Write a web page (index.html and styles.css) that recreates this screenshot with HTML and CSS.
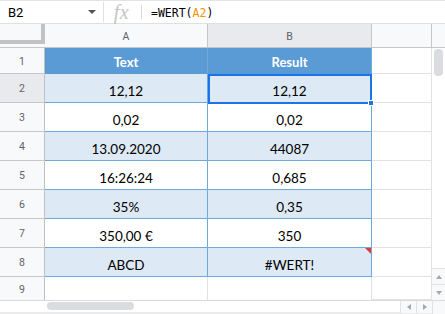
FILE: index.html
```html
<!DOCTYPE html>
<html>
<head>
<meta charset="utf-8">
<link rel="stylesheet" href="styles.css">
</head>
<body>
<div class="app">
  <div class="fbar">
    <div class="namebox"><span class="nb-text">B2</span><span class="nb-caret"></span></div>
    <div class="fx">fx</div>
    <div class="formula">=WERT(<span class="ref">A2</span>)</div>
  </div>
  <div class="sheet">
    <div class="corner"><div class="freeze"></div></div>
    <div class="colh">A</div>
    <div class="colh sel">B</div>
    <div class="colh">&nbsp;</div>
    <div class="vhead"></div>

    <div class="rowh">1</div>
    <div class="cell th">Text</div>
    <div class="cell th">Result</div>
    <div class="cell empty"></div>
    <div class="vscroll">
      <div class="vthumb"></div>
      <div class="vspace"></div>
      <div class="sbtn"><span class="tri up"></span></div>
      <div class="sbtn"><span class="tri down"></span></div>
    </div>

    <div class="rowh sel">2</div>
    <div class="cell band">12,12</div>
    <div class="cell band">12,12</div>
    <div class="cell empty"></div>

    <div class="rowh">3</div>
    <div class="cell">0,02</div>
    <div class="cell">0,02</div>
    <div class="cell empty"></div>

    <div class="rowh">4</div>
    <div class="cell band">13.09.2020</div>
    <div class="cell band">44087</div>
    <div class="cell empty"></div>

    <div class="rowh">5</div>
    <div class="cell">16:26:24</div>
    <div class="cell">0,685</div>
    <div class="cell empty"></div>

    <div class="rowh">6</div>
    <div class="cell band">35%</div>
    <div class="cell band">0,35</div>
    <div class="cell empty"></div>

    <div class="rowh">7</div>
    <div class="cell">350,00 €</div>
    <div class="cell">350</div>
    <div class="cell empty"></div>

    <div class="rowh">8</div>
    <div class="cell band">ABCD</div>
    <div class="cell band err">#WERT!<span class="note"></span></div>
    <div class="cell empty"></div>

    <div class="rowh last">9</div>
    <div class="cell plain"></div>
    <div class="cell plain"></div>
    <div class="cell empty"></div>

    <div class="hscroll">
      <div class="hthumb"></div>
      <div class="hspace"></div>
      <div class="sbtn h"><span class="tri left"></span></div>
      <div class="sbtn h"><span class="tri right"></span></div>
    </div>
    <div class="scorner"></div>

    <div class="selection"></div>
    <div class="handle"></div>
  </div>
</div>
</body>
</html>
```
FILE: styles.css
```css
* { box-sizing: border-box; }
html, body { margin: 0; padding: 0; }
body {
  width: 445px;
  height: 314px;
  overflow: hidden;
  background: #fff;
  font-family: "Lato", "Open Sans", sans-serif;
}
.app { width: 445px; height: 314px; display: flex; flex-direction: column; }

/* formula bar */
.fbar {
  height: 24px;
  border-top: 1px solid #e3e3e3;
  border-bottom: 1px solid #e0e0e0;
  display: flex;
  align-items: center;
}
.namebox {
  width: 104px;
  height: 20px;
  padding-left: 8px;
  padding-right: 7px;
  display: flex;
  align-items: center;
  justify-content: space-between;
  border-right: 1px solid #e0e0e0;
}
.nb-text { font-family: "Roboto", "Liberation Sans", sans-serif; font-size: 13px; color: #000; }
.nb-caret {
  width: 0; height: 0;
  border-left: 4px solid transparent;
  border-right: 4px solid transparent;
  border-top: 4px solid #555;
}
.fx {
  width: 38px;
  height: 14px;
  display: flex;
  align-items: center;
  justify-content: center;
  border-right: 1px solid #d8d8d8;
  font-family: "Liberation Serif", serif;
  font-style: italic;
  font-size: 20px;
  color: #c4c4c4;
  letter-spacing: 0.5px;
  padding-right: 2px;
}
.formula {
  padding-left: 9px;
  font-family: "DejaVu Sans Mono", monospace;
  font-size: 11.5px;
  color: #000;
  padding-top: 1px;
}
.ref { color: #f29500; }

/* sheet grid */
.sheet {
  position: relative;
  display: grid;
  grid-template-columns: 45px 163px 164px 60px 13px;
  grid-template-rows: 24px 26px repeat(7, 29px) 23px 14px;
}
.corner {
  background: #f8f9fa;
  border-bottom: 1px solid #c4c7c5;
}
.freeze {
  width: 45px;
  height: 20px;
  border-right: 4px solid #c0c2c4;
  border-bottom: 4px solid #c0c2c4;
}
.colh {
  background: #f8f9fa;
  border-right: 1px solid #c4c7c5;
  border-bottom: 1px solid #c4c7c5;
  display: flex;
  align-items: center;
  justify-content: center;
  font-family: "Roboto", "Liberation Sans", sans-serif;
  font-size: 10.5px;
  color: #5f6368;
  padding-top: 1px;
}
.colh.sel { background: #e8eaed; }
.vhead {
  background: #f8f9fa;
  border-bottom: 1px solid #c4c7c5;
}
.rowh {
  background: #f8f9fa;
  border-right: 1px solid #c0c0c0;
  border-bottom: 1px solid #c4c7c5;
  display: flex;
  align-items: center;
  justify-content: center;
  font-family: "Roboto", "Liberation Sans", sans-serif;
  font-size: 10.5px;
  color: #5f6368;
  padding-top: 1px;
}
.rowh.sel { background: #e8eaed; }
.rowh.last { border-bottom: none; }

.cell {
  position: relative;
  display: flex;
  align-items: flex-end;
  justify-content: center;
  padding-bottom: 3px;
  font-size: 13.5px;
  color: #000;
  background: #fff;
  border-right: 1px solid #6fa8dc;
  border-bottom: 1px solid #6fa8dc;
}
.cell.th {
  background: #5b9bd5;
  color: #fff;
  font-weight: 700;
  font-size: 13px;
  padding-bottom: 3px;
  border-right-color: #6fa8dc;
  border-bottom-color: #5b9bd5;
}
.cell.band { background: #dde9f5; }
.cell.plain { border-right-color: #e2e2e2; border-bottom: none; }
.cell.empty { border-right: 1px solid #e2e2e2; border-bottom: 1px solid #e2e2e2; }

.note {
  position: absolute;
  top: 0;
  right: 0;
  width: 0; height: 0;
  border-top: 6px solid #e53935;
  border-left: 6px solid transparent;
}

/* scrollbars */
.vscroll {
  grid-column: 5;
  grid-row: 2 / span 9;
  display: flex;
  flex-direction: column;
  background: #fff;
}
.vthumb {
  margin: 1px 2px 0 2px;
  height: 27px;
  border-radius: 4px;
  background: #dadce0;
}
.vspace { flex: 1; }
.sbtn {
  height: 16px;
  background: #f8f9fa;
  border-top: 1px solid #e2e2e2;
  display: flex;
  align-items: center;
  justify-content: center;
}
.sbtn.h {
  height: 12px;
  width: 16px;
  border-top: none;
  border-left: 1px solid #e2e2e2;
}
.tri { width: 0; height: 0; }
.tri.up { border-left: 3px solid transparent; border-right: 3px solid transparent; border-bottom: 4px solid #a8a8a8; }
.tri.down { border-left: 3px solid transparent; border-right: 3px solid transparent; border-top: 4px solid #a8a8a8; }
.tri.left { border-top: 3px solid transparent; border-bottom: 3px solid transparent; border-right: 4px solid #a8a8a8; }
.tri.right { border-top: 3px solid transparent; border-bottom: 3px solid transparent; border-left: 4px solid #a8a8a8; }

.hscroll {
  grid-column: 1 / span 4;
  grid-row: 11;
  display: flex;
  align-items: flex-start;
  border-top: 1px solid #dadada;
  border-bottom: 2px solid #ebebeb;
  background: #fff;
}
.hthumb {
  margin-left: 47px;
  margin-top: 1px;
  width: 87px;
  height: 8px;
  border-radius: 4px;
  background: #dadce0;
}
.hspace { flex: 1; }
.scorner {
  grid-column: 5;
  grid-row: 11;
  background: #f8f9fa;
  border-top: 1px solid #dadada;
  border-left: 1px solid #e2e2e2;
}

/* selection overlay */
.selection {
  position: absolute;
  left: 208px;
  top: 50px;
  width: 164px;
  height: 30px;
  border: 2px solid #1a73e8;
  pointer-events: none;
}
.handle {
  position: absolute;
  left: 368px;
  top: 76px;
  width: 6px;
  height: 6px;
  background: #1a73e8;
  border: 1px solid #fff;
}
```
